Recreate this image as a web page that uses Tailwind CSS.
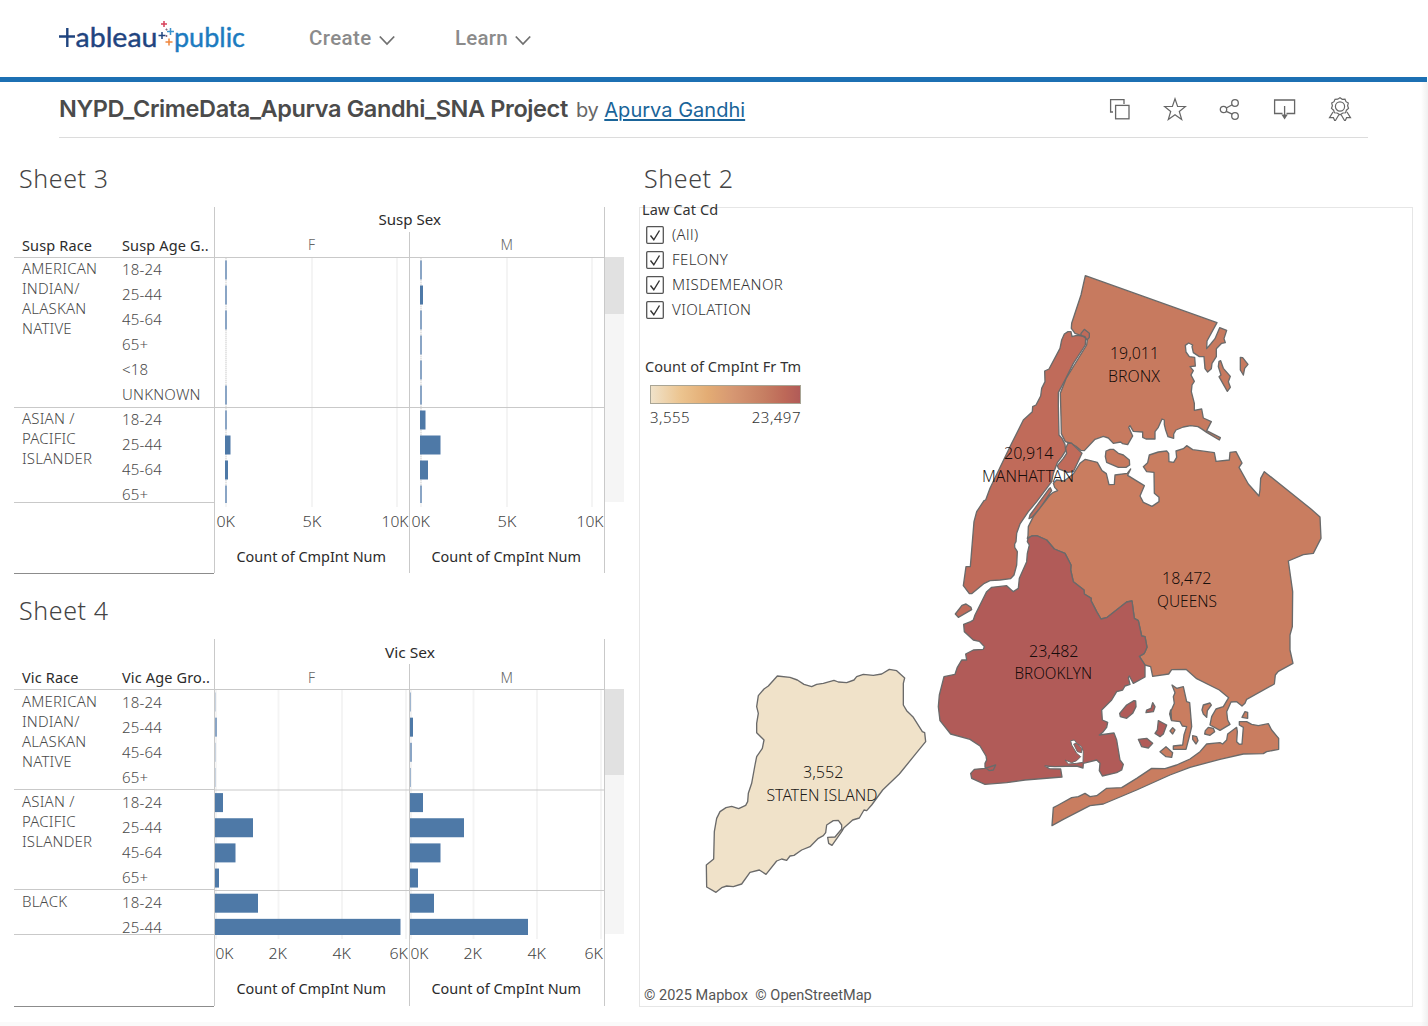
<!DOCTYPE html>
<html lang="en">
<head>
<meta charset="utf-8">
<title>NYPD_CrimeData_Apurva Gandhi_SNA Project</title>
<script src="https://cdn.jsdelivr.net/npm/@tailwindcss/browser@4"></script>
</head>
<body class="h-[1026px] w-[1428px] overflow-hidden bg-white font-['Noto_Sans',sans-serif] text-[#333]">
<div class="relative flex h-full flex-col">
  <header class="flex h-[77px] shrink-0 items-center pl-[58px]">
    <svg class="mb-1 h-10 w-[187px] shrink-0" viewBox="58 16 187 40" role="img" aria-label="tableau public">
      <g fill="none" stroke="#1f447f" stroke-width="2.4"><path d="M59 35.5H75M67.3 27V46"/></g>
      <text x="75.5" y="45.5" font-family="Lato" font-size="27" font-weight="400" fill="#1f447f" stroke="#1f447f" stroke-width=".4" textLength="82" lengthAdjust="spacingAndGlyphs">ableau</text>
      <text x="174" y="45.5" font-family="Lato" font-size="27" font-weight="400" fill="#1c7bc0" stroke="#1c7bc0" stroke-width=".4" textLength="71" lengthAdjust="spacingAndGlyphs">public</text>
      <g fill="none" stroke-width="1.5">
        <path stroke="#d8405a" d="M161 23H167M164 20V26"/>
        <path stroke="#1f447f" d="M158.500 34.500H165.500M162 31V38"/>
        <path stroke="#3d93cc" d="M167 30.500H174M170.500 27V34"/>
        <path stroke="#f0863c" d="M165.500 41H172.500M169 37.500V44.500"/>
        <path stroke="#8a6a80" stroke-width="1" d="M165.500 28.500H167.500M166.500 27.500V29.500M165.500 35H167.500M166.500 34V36"/>
      </g>
    </svg>
    <nav class="ml-16 flex items-center font-['Roboto',sans-serif] text-[20.5px] font-medium text-[#8b8b8b]">
      <a class="flex w-[146px] items-center gap-[7px]"><span class="tracking-[0.4px]">Create</span>
        <svg class="mt-[3px] size-4" viewBox="0 0 16 16" fill="none" stroke="#707070" stroke-width="1.8"><path d="M.8 4.500 8 12 15.200 4.500"/></svg></a>
      <a class="flex items-center gap-[7px]"><span class="tracking-[0.2px]">Learn</span>
        <svg class="mt-[3px] size-4" viewBox="0 0 16 16" fill="none" stroke="#707070" stroke-width="1.8"><path d="M.8 4.500 8 12 15.200 4.500"/></svg></a>
    </nav>
  </header>
  <div class="h-[5px] w-[1427px] shrink-0 bg-[#1c70b3]"></div>

  <section class="mr-[60px] ml-[59px] flex h-14 shrink-0 items-center border-b border-[#dcdcdc] font-['Inter',sans-serif]">
    <h1 class="w-[509px] pb-[2px] text-[23.5px] font-semibold tracking-[-0.39px] whitespace-nowrap text-[#4b4b4b]">NYPD_CrimeData_Apurva Gandhi_SNA Project</h1>
    <p class="ml-2 flex gap-[6px] text-[20px] tracking-[0.02px] whitespace-nowrap text-[#666]"><span class="tracking-[-0.4px]">by</span> <a class="text-[#1a6499] underline underline-offset-2">Apurva Gandhi</a></p>
    <div class="mt-[-2px] mr-4 ml-auto flex items-center gap-[31px]">
      <svg class="size-6" viewBox="0 0 24 24" fill="none" stroke="#666" stroke-width="1.300"><path d="M5 15H2.600V2.600H16V7"/><rect x="7.600" y="8.400" width="13.400" height="13.400"/></svg>
      <svg class="size-6" viewBox="0 0 24 24" fill="none" stroke="#666" stroke-width="1.200"><path d="M12 1.800 14.600 9.500H22.500L16.300 14.500 18.700 22.500 12 17.700 5.300 22.500 7.700 14.500 1.500 9.500H9.400Z"/></svg>
      <svg class="size-6" viewBox="0 0 24 24" fill="none" stroke="#666" stroke-width="1.300"><circle cx="5.500" cy="12.500" r="3.200"/><circle cx="17" cy="6" r="3.300"/><circle cx="17" cy="19" r="3.300"/><path d="M8.300 11 14.200 7.800M8.300 14.300 14.200 17.200"/></svg>
      <svg class="size-6" viewBox="0 0 24 24" fill="none" stroke="#666" stroke-width="1.300"><path d="M9.500 16.500H1.600V3H21.600V16.500H13.500M11.600 9V19"/><path fill="#666" stroke="none" d="M8.400 17.500H14.800L11.600 22.600Z"/></svg>
      <svg class="size-6" viewBox="0 0 24 24" fill="none" stroke="#666" stroke-width="1.200"><circle cx="12" cy="9.500" r="4.600"/><path d="M12 .8 14.300 2.300 17 2.200 18 4.700 20.300 6.100 19.600 8.800 20.500 11.400 18.400 13.200 17.600 15.800 14.900 16 12 17.700 9.100 16 6.400 15.800 5.600 13.200 3.500 11.400 4.400 8.800 3.700 6.100 6 4.700 7 2.300 9.700 2.200Z"/><path d="M5 15 1.500 20.700H5.400L7 24.200 11 17.500M19 15 22.500 20.700H18.600L17 24.200 13 17.500"/></svg>
    </div>
  </section>

  <main class="flex flex-1 pl-[14px]">
    <div class="w-[625px] shrink-0">
      <section>
        <h2 class="flex h-[69px] items-center pt-[12px] pl-[5px] text-[25px] font-light tracking-[0.6px] text-[#444]">Sheet 3</h2>
        <div id="suspects" class="flex h-[367px]"></div>
      </section>
      <section class="mt-[-1px]">
        <h2 class="flex h-[66px] items-center pt-[9px] pl-[5px] text-[25px] font-light tracking-[0.6px] text-[#444]">Sheet 4</h2>
        <div id="victims" class="flex h-[368px]"></div>
      </section>
    </div>

    <section class="w-[774px] shrink-0">
      <h2 class="flex h-[69px] items-center pt-[12px] pl-[5px] text-[25px] font-light tracking-[0.6px] text-[#444]">Sheet 2</h2>
      <div class="relative flex h-[800px] flex-col border border-[#e6e6e6]">
        <svg class="absolute -top-px -left-px h-[800px] w-[774px]" viewBox="639 207 774 800">
          <g stroke="#6a6a6a" stroke-width="4" stroke-linejoin="round">
            <g transform="translate(1040 260) scale(.33333)" fill="#c77a5f">
              <path d="M136 47 531 188 501 243 500 266 512 252 525 236 539 203 560 211 552 236 556 248 545 250 529 266 529 290 516 310 514 326 503 336 495 326 492 290 478 290 460 278 456 260 458 255 446 249 436 256 438 276 448 290 464 292 466 318 450 320 460 332 453 345 463 364 456 375 454 395 463 430 463 451 485 447 490 474 514 485 500 512 541 533 538 540 500 517 487 508 474 500 452 497 430 501 408 510 401 522 401 535 384 530 377 510 373 494 373 480 366 477 355 502 345 515 345 537 318 537 308 532 308 516 280 514 270 497 266 502 278 528 263 554 248 551 242 546 220 550 205 534 190 529 165 538 133 572 122 571 107 558 90 549 76 545 64 521 63 470 61 400 78 356 103 315 140 255 142 238 125 227 105 220 94 205 95 190 123 105Z"/>
              <path d="M210 568H220L235 580 250 585 268 600 269 615 258 622H235L200 607 196 590 198 573Z"/>
              <path d="M542 302 550 325 571 349 565 365 571 382 562 394 537 350 543 345 535 320 537 304ZM601 292 608 293 624 313 614 325 610 345 601 330Z"/>
            </g>
            <g transform="translate(940 320) scale(.33333)" fill="#c06b5a">
              <path d="M384 35H393L396 50 410 46 428 48 437 55 436 75 400 130 375 180 355 218V255L357 345 366 355 375 373 377 392 366 410 352 428 340 460 335 485 320 505 290 545 265 575 240 612 230 640 228 665 224 672V682L232 695 230 735 222 765 212 776 180 780 150 782 133 790 95 821H88L70 797 78 740H91L102 605 110 575 132 542 137 540 150 505 215 370 250 300 277 275 278 260 288 255 302 228 305 205 315 185 314 153 327 147 360 85 365 60 373 42Z"/>
              <path d="M384 370 394 369 426 400 400 455 383 457 356 447 352 437 370 415 380 400 377 385ZM326 508 331 503 335 512 300 565 275 592 267 596 270 585ZM66 856 78 852 93 862 95 869 55 892 46 882ZM423 40 433 28 448 40V52L441 60 435 50 423 46Z"/>
            </g>
            <g transform="translate(930 530) scale(.33333)" fill="#c97d60">
              <path d="M294 18 295-10 310-40 360-105 370-113 383-118 374-128 370-140 380-150 402-147 430-168 450-200 466-212 502-203 516-178 529-169 537-136 553-137 555-165 592-170 602-183 593-164 643-133 630-102 640-83 666-71 687-85V-98L673-110 672-173 650-175 640-190 653-202 658-225 685-234 710-237 716-230 717-205 731-203 740-218 738-237 760-244 770-253 788-241 853-232 858-206 898-210 900-233 918-235 936-201 927-188 955-138 987-102 990-120 992-155 1003-175 1143-63 1170-39 1173 25 1150 70 1120 74 1075 93 1088 185 1087 290 1080 315V360L1089 400 1045 424 1036 435 1033 462 950 508 945 520 936 528 920 515 903 516 890 545 893 570 900 583 870 601 840 585 845 560 858 537 880 530 896 503 868 480 800 446 768 418 725 419 716 432 668 439 662 410 645 405 628 379 643 370 651 352 645 320 635 318 625 272 613 265 606 213 590 216 530 263 513 267 500 245 483 212 484 205 463 192 462 180 430 155 422 120 423 105 405 70 373 57 350 30 320 17 305 18 292 25Z"/>
              <path d="M726 465 740 475 760 470 770 515 779 518 785 590 778 620 768 658H730V648L758 645 762 615 770 590 757 588 750 575 725 572 722 545 733 520 730 500 735 488ZM720 603 728 593 735 600 728 612ZM690 665 708 650 728 668 725 682 708 680ZM788 617 800 620 804 632 798 642 788 628ZM835 592 850 595 854 605 840 616 824 612 826 602ZM820 525 840 519 844 525 832 542 830 562 820 552 816 540ZM945 545 953 547V565L936 562Z"/>
              <path d="M366 887 370 833 385 825 425 803 445 800 465 790 480 800 500 797 530 775 575 773 620 745 665 715 705 716 740 705 780 687 810 665 830 642 870 638 878 642 890 630 893 612 920 592 922 605 920 635 928 643 936 642 940 592 928 585V575H950L965 583 985 587 1015 581 1025 600 1046 625V658L1010 665 1000 671 940 672 870 688 780 712 720 735 620 780 520 822 480 827 400 868Z"/>
            </g>
            <g transform="translate(930 530) scale(.33333)" fill="#b15b58">
              <path d="M294 25 305 18 320 17 350 30 373 57 405 70 423 105 422 120 430 155 462 180 463 192 484 205 483 212 500 245 513 267 530 263 590 216 606 213 613 265 625 272 635 318 645 320 651 352 643 370 628 379 645 405V441L610 460 598 438 595 443 600 463 585 468 578 480 560 485 545 510 515 540 517 570 533 577 530 592 520 605 508 615 530 612 552 609 560 630 570 690 580 703 575 720 560 728 517 738 508 722 510 700 500 690 460 700 459 714 440 708 375 710 345 708 358 716 392 717 396 741 285 750 230 758 165 763 125 745 122 730 133 718 165 715 197 705 190 720 178 722 165 712V700L170 690 168 678 150 648 120 628 62 612 30 572 25 530 28 495 42 440 75 433 82 412 95 390 110 390 107 372 130 360 160 358 163 350 148 334 130 330 103 305 101 283 122 275 130 270 135 255 170 185 185 172 230 167 250 185 265 175 268 145 290 95 292 70 298 45 292 35Z"/>
              <path d="M612 512 617 513 618 530 608 550 590 565 571 560 569 550 590 525ZM668 518 675 530 670 545 648 548 650 540 663 535ZM685 572 710 585 700 612 690 620 675 610 682 600ZM625 628 650 625 668 640 655 654 635 650ZM722 540 719 552 724 570Z"/>
              <path fill="#fff" stroke-width="3" d="M422 632 433 630 440 640 455 650 460 665 459 697 440 700 415 702 405 690 425 698 440 692 452 680 440 670 425 645Z"/>
              <path stroke-width="3" d="M431 642 440 640 455 655V668L442 665Z"/>
            </g>
            <path transform="translate(690 650) scale(.33333)" fill="#f0e2c9" d="M262 78 300 82 322 90 342 103 365 110 380 103 400 100 432 91 445 96 470 98 492 90 500 80 520 73 550 76 575 72 598 58 620 62 644 84 640 100V165L650 182 670 202 697 245 704 248 707 275 680 308 628 372 578 420 545 465 530 482 522 480 508 504 488 510 462 533 455 545 426 586 416 580 413 562 435 561 455 537V525L445 511 430 512 410 525 407 548 400 557 385 565 360 590 335 600 312 616 300 618 290 631 275 627 260 633 228 673 208 660 180 667 155 702 130 710 110 708 95 713 78 727 50 711 49 645 71 627 73 545 80 505 90 485 108 473 125 469 146 476 167 466 173 455 175 430 185 400 195 345 200 320 217 295 222 270 200 248V220L205 190 200 170 205 137 222 117 235 108Z"/>
          </g>
          <g font-size="15.500" font-weight="300" fill="#000" fill-opacity=".9">
            <text x="1110" y="358.500" textLength="49" lengthAdjust="spacingAndGlyphs">19,011</text><text x="1108" y="381.500" textLength="52" lengthAdjust="spacingAndGlyphs">BRONX</text>
            <text x="1004" y="458.500" textLength="49.500" lengthAdjust="spacingAndGlyphs">20,914</text><text x="982" y="481.500" textLength="92" lengthAdjust="spacingAndGlyphs">MANHATTAN</text>
            <text x="1162" y="583.500" textLength="49.500" lengthAdjust="spacingAndGlyphs">18,472</text><text x="1157" y="606.500" textLength="60" lengthAdjust="spacingAndGlyphs">QUEENS</text>
            <text x="1029" y="656.500" textLength="49.500" lengthAdjust="spacingAndGlyphs">23,482</text><text x="1014.500" y="678.500" textLength="77.500" lengthAdjust="spacingAndGlyphs">BROOKLYN</text>
            <text x="803" y="777.500" textLength="40.500" lengthAdjust="spacingAndGlyphs">3,552</text><text x="766.500" y="800.500" textLength="111" lengthAdjust="spacingAndGlyphs">STATEN ISLAND</text>
          </g>
        </svg>
        <div class="relative -mt-[10px] flex flex-col text-[15px] leading-[25px]">
          <h3 class="pl-[2px] text-[14.5px] leading-[22px] tracking-[0.1px]">Law Cat Cd</h3>
          <ul id="categories" class="mt-[2px] flex flex-col pl-[6px] font-light tracking-[0.4px] text-[#333]"></ul>
          <h3 class="mt-8 pl-[5px] text-[14.5px] tracking-[0.05px]">Count of CmpInt Fr Tm</h3>
          <div class="mt-[6px] mb-px ml-[10px] h-[19px] w-[151px] border border-[#a9a595] bg-linear-[90deg,#f0e2c9,#ecc48f_20%,#e3ac74_38%,#d69772_55%,#c67e62_76%,#bd6858_90%,#b15b58]"></div>
          <div class="ml-[10px] flex w-[151px] justify-between font-light tracking-[0.5px]"><span>3,555</span><span>23,497</span></div>
        </div>
        <p class="relative mt-auto pl-1 font-['Roboto',sans-serif] text-[14.5px] leading-[20px] tracking-[0.05px] whitespace-pre text-[#555]">© 2025 Mapbox  © OpenStreetMap</p>
      </div>
    </section>
  </main>
  <div class="absolute right-0 bottom-0 h-1 w-full bg-[#fafafa]"></div>
  <div class="absolute top-[82px] right-0 h-[944px] w-[7px] bg-linear-to-r from-transparent to-[#ececec]/80"></div>
</div>

<script>
document.getElementById('categories').innerHTML = ['(All)', 'FELONY', 'MISDEMEANOR', 'VIOLATION'].map(c => `
  <li class="flex h-[25px] items-center gap-2">
    <svg class="size-[18px]" viewBox="0 0 18 18" fill="none" stroke="#555" stroke-width="1.300"><rect x=".7" y=".7" width="16.600" height="16.600" rx="1"/><path stroke="#333" stroke-width="1.400" d="M4.500 9.500 7.800 13.800 13.500 4.500"/></svg>
    <span>${c}</span></li>`).join('');

const charts = [
  { id: 'suspects', head: ['Susp Race', 'Susp Age G..'], column: 'Susp Sex', columnX: [164.5, 62.5], height: 367, rowLeading: 'leading-[23px]', racePad: 'pt-0', headY: 0,
    groups: [['AMERICAN INDIAN/ ALASKAN NATIVE', ['18-24', '25-44', '45-64', '65+', '<18', 'UNKNOWN']], ['ASIAN / PACIFIC ISLANDER', ['18-24', '25-44', '45-64', '65+']]],
    zero: 11, top: 53.5, step: 25, f: [2, 2, 2, 0, 0, 2, 2, 5.5, 3, 2], m: [2, 3, 2, 2, 2, 2, 5.5, 20.5, 8, 2],
    grid: [98, 183], lines: [200.5], ticks: [['0K', 2.5, 18.5], ['5K', 88.5, 19], ['10K', 167.5, 27]], thumb: 57 },
  { id: 'victims', head: ['Vic Race', 'Vic Age Gro..'], column: 'Vic Sex', columnX: [171, 50], height: 368, rowLeading: 'leading-[25px]', racePad: 'pt-px', headY: 1,
    groups: [['AMERICAN INDIAN/ ALASKAN NATIVE', ['18-24', '25-44', '45-64', '65+']], ['ASIAN / PACIFIC ISLANDER', ['18-24', '25-44', '45-64', '65+']], ['BLACK', ['18-24', '25-44']]],
    zero: 1, top: 53.5, step: 25.15, f: [.4, 2, .4, .4, 8, 38, 20.5, 4, 43, 185.5], m: [.8, 3, 2, .8, 13, 54, 30.5, 8, 24, 118],
    grid: [64.5, 128, 192], lines: [151, 251.5], ticks: [['0K', 1.5, 18], ['2K', 54.5, 18.5], ['4K', 118.5, 18.5], ['6K', 175.5, 18.5]], thumb: 86 }
];

for (const c of charts) {
  const label = (t, x, y, w, extra = '') => `<text x="${x}" y="${y}" textLength="${w}" lengthAdjust="spacingAndGlyphs" ${extra}>${t}</text>`;
  let plot = '';
  [0, 195].forEach((dx, k) => {
    plot += [c.zero + 1, ...c.grid].map(x => `<path stroke="#f4f4f4" stroke-width="2" d="M${x + dx} 51V300"/>`).join('');
    if (c.zero > 1) plot += `<path stroke="#d5d5d5" stroke-dasharray="1 1" d="M${c.zero + dx + 1} 51V295"/>`;
    plot += (k ? c.m : c.f).map((w, i) => {
      const y = c.top + i * c.step;
      return `<rect x="${c.zero + dx}" y="${y}" width="${w}" height="${Math.min(19, 296 - y)}" fill="${w <= 2 ? '#8aa5c5' : '#4e79a7'}"/>`;
    }).join('');
    plot += c.ticks.map(([t, x, w]) => label(t, x + dx, 319.5, w, 'font-size="15" font-weight="300" fill="#444"')).join('');
    plot += label('Count of CmpInt Num', 22.5 + dx, 355, 149.5);
    plot += label(k ? 'M' : 'F', k ? 286.5 : 94, 43 + c.headY, k ? 12.5 : 7, 'font-weight="300" fill="#666"');
  });
  plot += label(c.column, c.columnX[0], 18 + c.headY, c.columnX[1]);
  plot += `<path fill="none" stroke="#c9c9c9" d="M.5 0V${c.height - 1}M195.500 25V${c.height - 1}M390.500 0V${c.height - 1}M0 50.500H391${c.lines.map(y => `M0 ${y}H391`).join('')}"/>`;

  document.getElementById(c.id).innerHTML = `
    <div class="flex w-[200px] flex-col border-b border-[#8c8c8c] text-[15px] font-light tracking-[0.2px] text-[#4a4a4a]">
      <div class="flex h-[51px] shrink-0 items-end border-b border-[#c9c9c9] pl-2 text-[14.5px] leading-[24px] font-normal tracking-[0.15px] text-[#2b2b2b]">
        <span class="w-[100px]">${c.head[0]}</span><span class="whitespace-nowrap">${c.head[1]}</span>
      </div>
      <div class="flex h-[245px] shrink-0 flex-col border-b border-[#c9c9c9]">
        ${c.groups.map(([race, ages], g) => `
        <div class="flex shrink-0 pl-2 ${g < c.groups.length - 1 ? 'border-b border-[#c9c9c9]' : ''}" style="height:${ages.length * 25}px">
          <p class="${c.racePad} w-[100px] pr-3 leading-[20px]">${race}</p>
          <div class="flex flex-col ${c.rowLeading}">${ages.map(a => `<span class="h-[25px] shrink-0">${a.replace('<', '&lt;')}</span>`).join('')}</div>
        </div>`).join('')}
      </div>
    </div>
    <svg class="h-full w-[391px] shrink-0" viewBox="0 0 391 ${c.height}" font-size="14.5" fill="#2b2b2b">${plot}</svg>
    <div class="mt-[50px] h-[245px] w-[19px] bg-[#f5f5f5]"><div class="bg-[#e1e1e1]" style="height:${c.thumb}px"></div></div>`;
}
</script>
</body>
</html>
